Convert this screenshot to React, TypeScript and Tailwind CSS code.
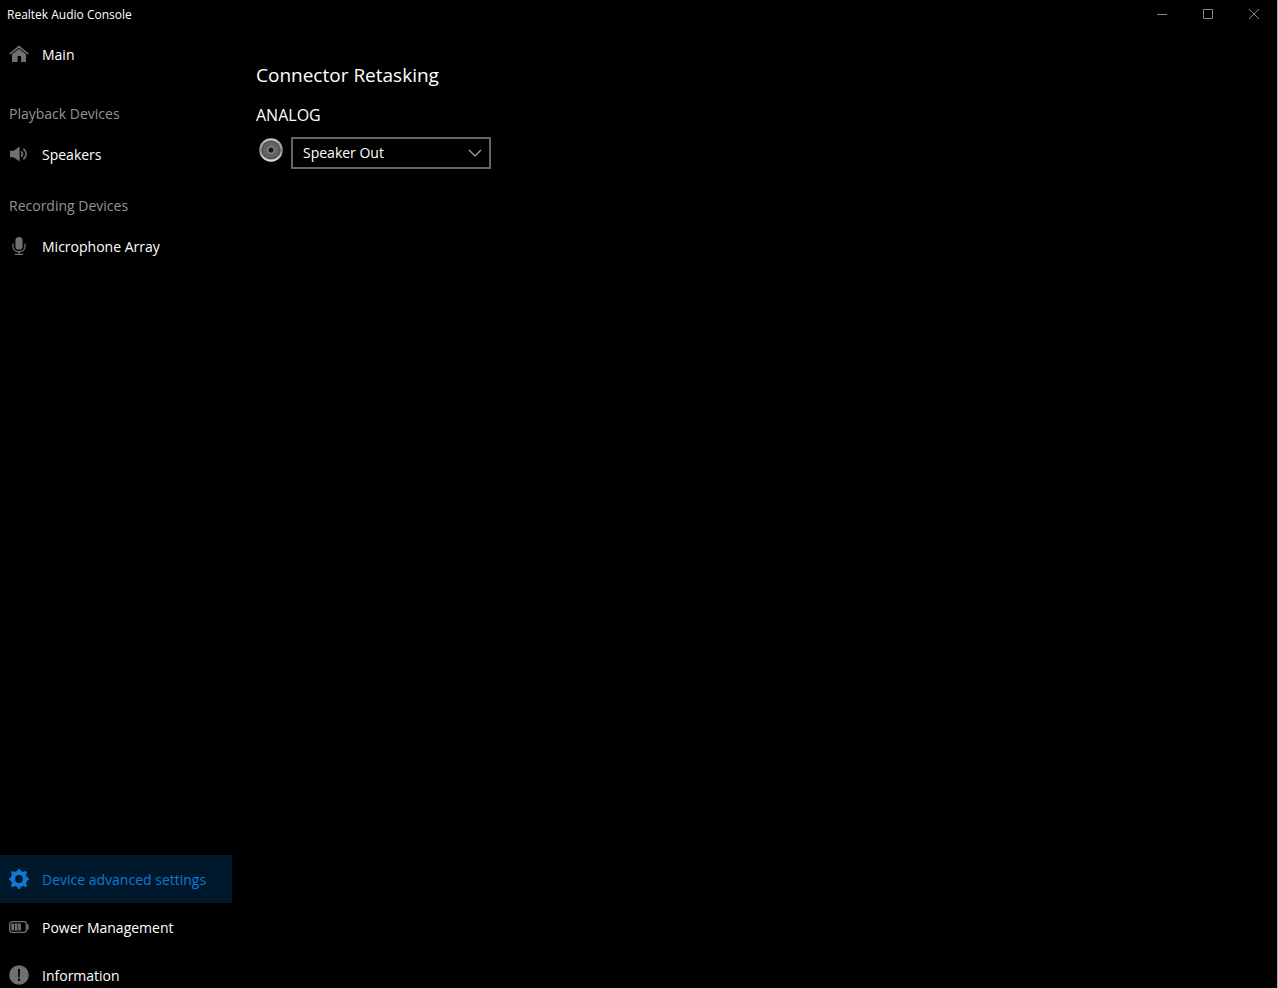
import React from 'react';

interface NavItemProps {
  label: string;
  icon: React.ReactNode;
  active?: boolean;
}

const HomeIcon = () => (
  <svg width="20" height="20" viewBox="0 0 20 20" fill="currentColor" aria-hidden="true">
    <path d="M10 1.6 19.8 9.4 18.9 10.7 10 3.8 1.1 10.7.2 9.4Z" />
    <path d="M10 4.8 17 10.2V18H12V12H8.6V18H3V10.2Z" />
  </svg>
);

const SpeakerIcon = () => (
  <svg width="20" height="20" viewBox="0 0 20 20" fill="currentColor" aria-hidden="true">
    <path d="M1 6.8H4.5L10.6 2.4V17.6L4.5 13.2H1Z" />
    <path d="M12.2 7.2Q14.6 10 12.2 12.8M14.4 4.6Q19.8 10 14.4 15.4" fill="none" stroke="currentColor" strokeWidth="1.7" />
  </svg>
);

const MicIcon = () => (
  <svg width="20" height="20" viewBox="0 0 20 20" fill="currentColor" aria-hidden="true">
    <rect x="6.4" y="1" width="7.2" height="12.8" rx="3.6" />
    <path d="M4 7.6V10.2C4 13.6 6.8 15.6 10 15.6S16 13.6 16 10.2V7.6M10 15.4V18.4M5.8 18.4H14.2" fill="none" stroke="currentColor" strokeWidth="1.3" />
  </svg>
);

const GearIcon = () => (
  <svg width="20" height="20" viewBox="0 0 20 20" fill="none" stroke="currentColor" aria-hidden="true">
    <circle cx="10" cy="10" r="6.1" strokeWidth="4.4" />
    <path
      d="M10 1.6V4M10 16V18.4M1.6 10H4M16 10H18.4M3.7 3.7 5.6 5.6M14.4 14.4 16.3 16.3M3.7 16.3 5.6 14.4M14.4 5.6 16.3 3.7"
      strokeWidth="3.2"
      strokeLinecap="round"
    />
  </svg>
);

const BatteryIcon = () => (
  <svg width="20" height="20" viewBox="0 0 20 20" fill="none" stroke="currentColor" aria-hidden="true">
    <rect x=".7" y="4.7" width="16.6" height="10.6" rx="2.4" strokeWidth="1.3" />
    <path d="M18.6 7.2V12.8" strokeWidth="2" />
    <path d="M3.7 6.6V13.4M7.1 6.6V13.4M10.5 6.6V13.4" strokeWidth="2.7" />
  </svg>
);

const InfoIcon = () => (
  <svg width="20" height="20" viewBox="0 0 20 20" aria-hidden="true">
    <circle cx="10" cy="10" r="9.8" fill="currentColor" />
    <path d="M9 4H11L10.7 12.4H9.3Z" fill="#000" />
    <circle cx="10" cy="14.8" r="1.2" fill="#000" />
  </svg>
);

const JackIcon = () => (
  <svg width="24" height="24" viewBox="0 0 24 24" className="mt-px" aria-hidden="true">
    <defs>
      <linearGradient id="jack-rim" x1="0" y1="0" x2="0" y2="1">
        <stop offset="0" stopColor="#c8c8c8" />
        <stop offset=".5" stopColor="#8a8a8a" />
        <stop offset="1" stopColor="#e8e8e8" />
      </linearGradient>
    </defs>
    <circle cx="12" cy="12" r="11.8" fill="url(#jack-rim)" />
    <circle cx="12" cy="12" r="9.6" fill="#4c4c4c" />
    <circle cx="12" cy="12" r="8.4" fill="#626262" />
    <circle cx="12" cy="12" r="4.4" fill="#7c7c7c" />
    <circle cx="12" cy="12" r="2.5" fill="#181818" />
  </svg>
);

const NavItem: React.FC<NavItemProps> = ({ label, icon, active }) => (
  <a
    href="#"
    aria-current={active ? 'page' : undefined}
    className={`flex h-12 shrink-0 items-center gap-[13px] pl-[9px] text-sm leading-5 ${active ? 'bg-[#00182b] text-[#0f78d4]' : 'text-white'}`}
  >
    <span className={active ? 'text-[#0f78d4]' : 'text-[#707070]'}>{icon}</span>
    <span className="pt-0.5">{label}</span>
  </a>
);

const NavHeading: React.FC<{ children: React.ReactNode }> = ({ children }) => (
  <h2 className="flex h-[34px] items-center pl-[9px] pt-0.5 text-sm leading-5 text-[#949494]">{children}</h2>
);

const TitleBar = () => (
  <header className="flex h-[30px] shrink-0 items-start justify-between">
    <h1 className="pl-[7px] pt-[7px] text-xs leading-4">Realtek Audio Console</h1>
    <div className="flex text-[#858585]">
      <button aria-label="Minimize" className="flex h-7 w-[46px] items-center justify-center">
        <svg width="10" height="10" viewBox="0 0 10 10" stroke="currentColor"><path d="M0 5.5H10" /></svg>
      </button>
      <button aria-label="Maximize" className="flex h-7 w-[46px] items-center justify-center">
        <svg width="10" height="10" viewBox="0 0 10 10" fill="none" stroke="currentColor"><path d="M.5.5H9.5V9.5H.5Z" /></svg>
      </button>
      <button aria-label="Close" className="flex h-7 w-[46px] items-center justify-center">
        <svg width="10" height="10" viewBox="0 0 10 10" stroke="currentColor"><path d="M0 0 10 10M10 0 0 10" /></svg>
      </button>
    </div>
  </header>
);

const App: React.FC = () => {
  return (
    <div className="flex h-screen flex-col overflow-hidden border-r border-[#b0b0b0] bg-black font-['Open_Sans','Noto_Sans',sans-serif] text-white">
      <TitleBar />
      <div className="flex min-h-0 flex-1">
        <nav className="flex w-[232px] shrink-0 flex-col">
          <NavItem label="Main" icon={<HomeIcon />} />
          <section className="mt-[18px]">
            <NavHeading>Playback Devices</NavHeading>
            <NavItem label="Speakers" icon={<SpeakerIcon />} />
          </section>
          <section className="mt-[10px]">
            <NavHeading>Recording Devices</NavHeading>
            <NavItem label="Microphone Array" icon={<MicIcon />} />
          </section>
          {/* last row runs slightly past the window edge */}
          <div className="-mb-[11px] mt-auto flex flex-col">
            <NavItem label="Device advanced settings" icon={<GearIcon />} active />
            <NavItem label="Power Management" icon={<BatteryIcon />} />
            <NavItem label="Information" icon={<InfoIcon />} />
          </div>
        </nav>

        <main className="flex-1 pl-6 pt-[33px]">
          <h2 className="text-[19px] leading-6">Connector Retasking</h2>
          <h3 className="mt-4 text-base leading-6">
            <label htmlFor="analog-connector">ANALOG</label>
          </h3>
          <div className="mt-[10px] flex items-start gap-2 pl-[3px]">
            <JackIcon />
            <div className="grid w-[200px] items-center">
              <select
                id="analog-connector"
                className="col-start-1 row-start-1 h-8 w-full appearance-none border-2 border-[#666666] bg-black pl-[10px] text-sm leading-5 text-white"
              >
                <option>Speaker Out</option>
              </select>
              <svg
                width="14"
                height="8"
                viewBox="0 0 14 8"
                fill="none"
                stroke="#b0b0b0"
                className="pointer-events-none col-start-1 row-start-1 mr-[9px] justify-self-end"
                aria-hidden="true"
              >
                <path d="M1 1 7 7 13 1" strokeWidth="1.1" />
              </svg>
            </div>
          </div>
        </main>
      </div>
    </div>
  );
};

export default App;
